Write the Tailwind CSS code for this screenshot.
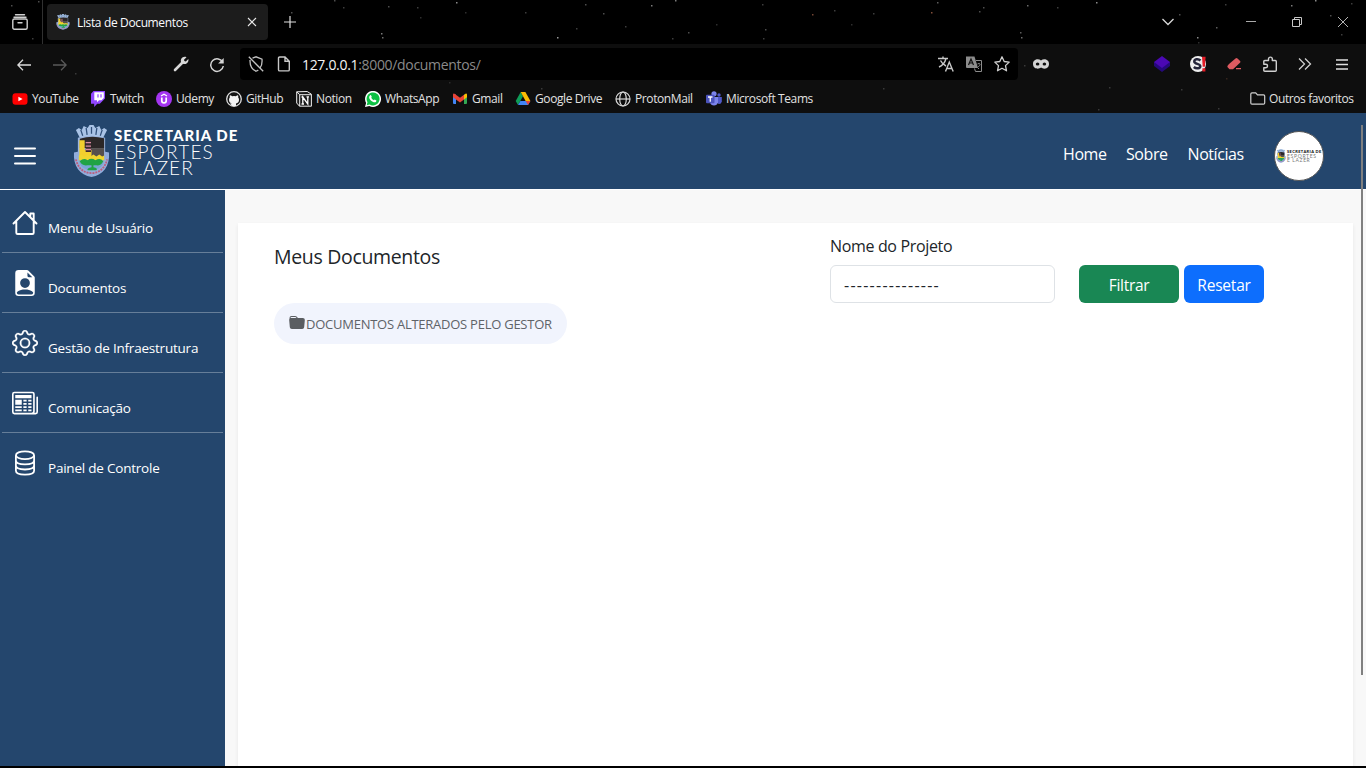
<!DOCTYPE html>
<html lang="pt-BR">
<head>
<meta charset="utf-8">
<title>Lista de Documentos</title>
<script src="https://cdn.jsdelivr.net/npm/@tailwindcss/browser@4"></script>
</head>
<body class="w-[1366px] h-[768px] overflow-hidden bg-black font-['Open_Sans','Noto_Sans',sans-serif]">
<svg class="hidden">
  <symbol id="crest" viewBox="0 0 38 54" preserveAspectRatio="none">
    <path d="M3 5l3-2 3 2 2-4 4 2 2-3h4l2 3 4-2 2 4 3-2 3 2-4 8H7z" fill="#a9c3e6"/>
    <path d="M8 5l2 6M13.500 3l1 7M19 2v7M24.500 3l-1 7M30 5l-2 6" stroke="#31507a" stroke-width="1.300"/>
    <path d="M5 13q14-4 28 0v24H5z" fill="#9db6de"/>
    <path d="M7 14q12-4 25-.500v10H7z" fill="#2b2727"/>
    <path d="M18 23.500h14v10H18z" fill="#55504d"/>
    <path d="M6.500 15.500h5.500v10h7v8H6.500z" fill="#f3cf2e"/>
    <path d="M13 15.500h5.500v12H13z" fill="#3a2a30"/>
    <path d="M13 18h5.500M13 21.500h5.500M13 25h5.500" stroke="#d98da0" stroke-width="1.400"/>
    <path d="M1 28l5-1v8h26v-8l5 1c1 14-6 23-18 25C7 51 0 42 1 28z" fill="#92addb"/>
    <path d="M3 35c2 9 8 14 16 14s14-5 16-14" fill="none" stroke="#bd5c7c" stroke-width="1.800" stroke-dasharray="2 1"/>
    <path d="M6 31l3-1 3 2 3-2 3 2 3-2 3 2 3-2 3 2 2-1v6H6z" fill="#f0d52f"/>
    <path d="M6 36h26c-1 6-5 10-13 10S7 42 6 36z" fill="#79a6d4"/>
    <path d="M7 37q4-4 8-1 4-3 8 0 5-3 8 1-2 5-7 4h-3v2q5 1 3 3h-9q-1-2 4-3v-2h-4q-6 1-8-4z" fill="#20a345"/>
  </symbol>
</svg>

<div class="relative h-[113px] bg-[#0e0e0e] text-[#fbfbfe]">
  <div class="h-11 flex items-center bg-black">
    <div class="w-[43px] h-11 border-r border-[#303030] flex items-center pl-3">
      <svg class="size-4" viewBox="0 0 16 16" fill="none" stroke="#d0d0d0" stroke-width="1.400" stroke-linecap="round"><path d="M3.500 .8h9M2 3.300h12"/><rect x=".8" y="5" width="14.400" height="10.200" rx="1.500" /><path d="M6 8.700h4"/></svg>
    </div>
    <div class="ml-1 w-[221px] h-9 rounded bg-[#1c1c1c] flex items-center pl-[9px]">
      <svg class="w-[14px] h-4"><use href="#crest"/></svg>
      <span class="ml-[7px] mt-0.5 w-[170px] text-[12px] tracking-[-0.360px] whitespace-nowrap">Lista de Documentos</span>
      <svg class="size-[10px]" viewBox="0 0 10 10" stroke="#e8e8e8" stroke-width="1.100"><path d="M1 1l8 8M9 1L1 9"/></svg>
    </div>
    <svg class="ml-4 size-3" viewBox="0 0 12 12" stroke="#e0e0e0" stroke-width="1.200"><path d="M0 6h12M6 0v12"/></svg>
    <svg class="ml-[866px] w-3 h-2" viewBox="0 0 12 8" fill="none" stroke="#d8d8d8" stroke-width="1.300"><path d="M.5 1L6 6.500 11.500 1"/></svg>
    <svg class="ml-[72px] w-[10px] h-2" viewBox="0 0 10 8"><path d="M0 3.500h10" stroke="#aaa"/></svg>
    <svg class="ml-9 size-[10px]" viewBox="0 0 10 10" fill="none" stroke="#c8c8c8"><path d="M.5 2.500h7v7h-7zM2.500 2.500v-2h7v7h-2"/></svg>
    <svg class="ml-9 size-[10px]" viewBox="0 0 10 10" stroke="#c8c8c8" stroke-width=".9"><path d="M0 0l10 10M10 0L0 10"/></svg>
  </div>

  <div class="h-10 flex items-center">
    <svg class="ml-[17px] mt-px w-[14px] h-3" viewBox="0 0 14 12" fill="none" stroke="#dcdcdc" stroke-width="1.300"><path d="M14 6H.8M6 .7L.8 6 6 11.300"/></svg>
    <svg class="ml-[22px] mt-px w-[14px] h-3" viewBox="0 0 14 12" fill="none" stroke="#5a5a5a" stroke-width="1.300"><path d="M0 6h13.200M8 .7L13.200 6 8 11.300"/></svg>
    <svg class="ml-[106px] size-4" viewBox="0 0 16 16"><path d="M2 14L9.500 6.500" stroke="#d8d8d8" stroke-width="2.600" stroke-linecap="round"/><path d="M13.500 1.200L11 3.700l.4 1.400 1.400.4 2.500-2.500c.7 2.300-.9 5-3.500 5C9 8 7.300 6 7.900 3.700 8.500 1.400 11.300.1 13.500 1.200z" fill="#d8d8d8"/></svg>
    <svg class="ml-5 mt-px size-4" viewBox="0 0 16 16" fill="none" stroke="#d4d4d4" stroke-width="1.500"><path d="M13.800 5.500A6.300 6.300 0 1 0 14.300 9"/><path d="M14.700 1v5.600H9.100z" fill="#d4d4d4" stroke="none"/></svg>
    <div class="ml-[15px] w-[778px] h-8 rounded bg-black flex items-center pl-2">
      <svg class="size-4" viewBox="0 0 16 16" fill="none" stroke="#c2c2c2" stroke-width="1.300"><path d="M4.500 2.200L8 .8l6 2.400c.3 4-.4 7-2 9M10.300 14q-1 .8-2.300 1.200C3.600 13.400 1.800 9.500 2 4M.8.800l14.400 14.400"/></svg>
      <svg class="ml-3 size-4" viewBox="0 0 16 16" fill="none" stroke="#c8c8c8" stroke-width="1.400"><path d="M2.500 2.200q0-1.200 1.200-1.200H9l4.300 4.300v8.400q0 1.200-1.200 1.200H3.700q-1.200 0-1.200-1.200zM9 1v4.300h4.300"/></svg>
      <span class="ml-[10px] mt-px w-[636px] text-[14px] tracking-[-0.320px] whitespace-nowrap text-[#8a8a8a]"><span class="text-[#f4f4f4]">127.0.0.1</span>:8000/documentos/</span>
      <svg class="size-4" viewBox="0 0 16 16" fill="none" stroke="#c8c8c8" stroke-width="1.400"><path d="M0 2.500h10M5 .5v2M8 2.500C7 6.500 4.500 9.500 1 11M2.500 4.500C4 7.500 6 9 8 10M7.500 15.500l3.800-9.500 3.900 9.500M8.800 12.500h5"/></svg>
      <svg class="ml-3 size-4" viewBox="0 0 16 16"><path d="M0 .5h8.500L12 12H1q-1 0-1-1z" fill="#8c8c8c"/><path d="M2.500 9L5 3l2.500 6M3.500 7h3" fill="none" stroke="#111" stroke-width="1.200"/><path d="M10 4.500h5.500v11H9.500l-1-3" fill="none" stroke="#8c8c8c"/><path d="M11.500 8q2.500-1.500 2.500.5c0 1.500-1.500 1-1.500 2.500M12.500 12v1" fill="none" stroke="#8c8c8c"/></svg>
      <svg class="ml-3 size-4" viewBox="0 0 16 16" fill="none" stroke="#cfcfcf" stroke-width="1.300" stroke-linejoin="round"><path d="M8 .8l2.200 4.700 5 .6-3.700 3.500 1 5.200L8 12.300l-4.500 2.500 1-5.200L.8 6.100l5-.6z"/></svg>
    </div>
    <svg class="ml-[15px] w-4 h-[10px]" viewBox="0 0 16 10"><path d="M8 1.500C5.500-.7 0 .100 0 5S5.500 10.700 8 8.500c2.500 2.200 8 1.400 8-3.500S10.500-.7 8 1.500z" fill="#d4d4d4"/><ellipse cx="4.600" cy="5" rx="1.800" ry="1.500" fill="#0e0e0e"/><ellipse cx="11.400" cy="5" rx="1.800" ry="1.500" fill="#0e0e0e"/></svg>
    <svg class="ml-[105px] size-4" viewBox="0 0 16 16"><path d="M0 6v4l8 6 8-6V6z" fill="#25087c"/><path d="M8 0l8 6-8 6-8-6z" fill="#4b08b4"/></svg>
    <svg class="ml-5 size-4" viewBox="0 0 16 16"><circle cx="8" cy="8" r="8" fill="#eee"/><path d="M10.500 4.500C8 2.200 4.300 3.200 4.300 5.500c0 3 6 1.700 6 4.700 0 2.300-4 3-6.500.8" fill="none" stroke="#25253a" stroke-width="2.500"/><path d="M12 .8h3.600l-.7 10h-2.200zM12.400 12.200h3v3.300h-3z" fill="#e31b25"/></svg>
    <svg class="ml-[21px] size-4" viewBox="0 0 16 16"><path d="M2 8L8.500 2.400q1-.8 2 .1l2.600 2.500q.7.900-.1 1.800L6 13.200H2.500L.8 11.400q-.9-1.200 0-2zM9 12h5v1.300H9z" fill="#de5b61"/></svg>
    <svg class="ml-[19px] size-4" viewBox="0 0 16 16" fill="none" stroke="#d0d0d0" stroke-width="1.400" stroke-linejoin="round"><path d="M1.800 5.500q0-1 1-1h3.700V3a1.900 1.900 0 0 1 3.800 0v1.500h3q1 0 1 1v8.700q0 1-1 1H2.800q-1 0-1-1v-2.400h2a1.700 1.700 0 0 0 0-3.500h-2z"/></svg>
    <svg class="ml-5 size-[14px]" viewBox="0 0 14 14" fill="none" stroke="#d0d0d0" stroke-width="1.300"><path d="M1 1.500L6.500 7 1 12.500M7 1.500L12.500 7 7 12.500"/></svg>
    <svg class="ml-6 w-3 h-[11px]" viewBox="0 0 12 11" stroke="#e0e0e0" stroke-width="1.300"><path d="M0 1h12M0 5.500h12M0 10h12"/></svg>
  </div>

  <div class="h-[29px] flex items-center px-3 gap-3 text-[12px] tracking-[-0.400px] text-[#e2e2e2] whitespace-nowrap">
    <div class="flex items-center gap-1"><svg class="size-4" viewBox="0 0 16 16"><rect x=".5" y="2.300" width="15" height="11.400" rx="3" fill="#f00"/><path d="M6.400 5.700l4.200 2.300-4.200 2.300z" fill="#fff"/></svg><span class="w-[46px]">YouTube</span></div>
    <div class="flex items-center gap-1"><svg class="size-4" viewBox="0 0 16 16"><path d="M3.500 0L1 2.700v10h3.200V16l3-3.300h2.600L15 7.500V0z" fill="#9146ff"/><path d="M4.300 1.200h9.500v5.800l-2.300 2.300H9l-2 2v-2H4.300z" fill="#fff"/><path d="M8 3.300v3.200M11 3.300v3.200" stroke="#9146ff" stroke-width="1.200"/></svg><span class="w-[34px]">Twitch</span></div>
    <div class="flex items-center gap-1"><svg class="size-4" viewBox="0 0 16 16"><circle cx="8" cy="8" r="8" fill="#a435f0"/><path d="M5 5l3-1.700L11 5" fill="none" stroke="#fff" stroke-width="1.300"/><path d="M5.800 6.500v3.200q0 2.200 2.200 2.200t2.200-2.200V6.500" fill="none" stroke="#fff" stroke-width="1.700"/></svg><span class="w-[38px]">Udemy</span></div>
    <div class="flex items-center gap-1"><svg class="size-4" viewBox="0 0 16 16"><circle cx="8" cy="8" r="7.300" fill="#151515" stroke="#ddd" stroke-width="1.300"/><path d="M6 15v-2.500q-2 .5-2.700-1.300M6 12.500c-2-.4-3-1.600-3-3.700q0-1.300.8-2.200-.3-1.300.2-2.300 1 0 2.200.9a7 7 0 0 1 3.600 0q1.200-.9 2.200-.9.500 1 .2 2.300.8.900.8 2.200c0 2.100-1 3.300-3 3.700V15H6z" fill="#f4f4f4"/></svg><span class="w-[38px]">GitHub</span></div>
    <div class="flex items-center gap-1"><svg class="size-4" viewBox="0 0 16 16"><path d="M.7.800l10.500-.3 4.200 2.700v12H3.500L.7 12z" fill="#1a1a1a" stroke="#eee"/><path d="M.8 1l3 2.700h11.400M3.700 3.700v11.500" fill="none" stroke="#eee"/><path d="M6.800 13V6l5 7V5.800M5.500 6h2M10.500 5.800h2.500M5.500 13h2.500" fill="none" stroke="#fff" stroke-width="1.300"/></svg><span class="w-[37px]">Notion</span></div>
    <div class="flex items-center gap-1"><svg class="size-4" viewBox="0 0 16 16"><path d="M0 16l1.100-4.100A8 8 0 1 1 4.300 15z" fill="#fff"/><path d="M1.700 14.300l.8-3A6.500 6.500 0 1 1 4.700 13.500z" fill="#0cc043"/><path d="M5 4.500c.5-.7 1-.6 1.300.2l.5 1.200-.6.9q.9 1.700 2.600 2.500l.9-.8 1.700.9c.1 1.500-1.300 2.200-2.700 1.800-2.500-.8-4.800-3.400-4.500-5.200.1-.8.500-1.200.8-1.500z" fill="#fff"/></svg><span class="w-[55px]">WhatsApp</span></div>
    <div class="flex items-center gap-1"><svg class="size-4" viewBox="0 0 16 16"><path d="M1 3.500h3V13H2q-1 0-1-1z" fill="#4285f4"/><path d="M12 3.500h3V12q0 1-1 1h-2z" fill="#34a853"/><path d="M12 4l1.500-1.300Q15 2.300 15 4v2.300L12 8.500z" fill="#fbbc04"/><path d="M1 4q0-1.800 1.500-1.300L8 6.800l4-3v4.700l-4 3-7-5.200z" fill="#ea4335"/></svg><span class="w-[31px]">Gmail</span></div>
    <div class="flex items-center gap-1"><svg class="size-4" viewBox="0 0 16 16"><path d="M5.700 1L.7 10l2.300 4 5-8.800z" fill="#0f9d58"/><path d="M5.700 1h4.700l5 9h-4.800z" fill="#fbbc04"/><path d="M5.400 10h10l-2.400 4H3z" fill="#4285f4"/><path d="M10.700 10h4.700L13 14z" fill="#ea4335"/></svg><span class="w-[68px]">Google Drive</span></div>
    <div class="flex items-center gap-1"><svg class="size-4" viewBox="0 0 16 16" fill="none" stroke="#d8d8d8" stroke-width="1.200"><circle cx="8" cy="8" r="7"/><ellipse cx="8" cy="8" rx="3.300" ry="7"/><path d="M1 8h14"/></svg><span class="w-[59px]">ProtonMail</span></div>
    <div class="flex items-center gap-1"><svg class="size-4" viewBox="0 0 16 16"><circle cx="13" cy="4" r="1.700" fill="#5059c9"/><circle cx="8" cy="2.800" r="2.600" fill="#7b83eb"/><path d="M11 6h4.800v4.500q-.6 3-3.500 2.500z" fill="#5059c9"/><path d="M4 6h8v5.500a4.200 4.200 0 0 1-8 0z" fill="#7b83eb"/><rect y="3.800" width="8.500" height="8.500" rx="1" fill="#4b53bc"/><path d="M2 6h4.500M4.250 6v4.800" stroke="#fff" stroke-width="1.300"/></svg><span class="w-[87px]">Microsoft Teams</span></div>
    <div class="ml-auto flex items-center gap-[3px]"><svg class="size-4" viewBox="0 0 16 16" fill="none" stroke="#d0d0d0" stroke-width="1.200"><path d="M.8 3q0-1.200 1.200-1.200h3.700L7.500 3.800h6q1.200 0 1.200 1.200v7q0 1.200-1.200 1.200H2Q.8 13.200.8 12z"/></svg><span class="w-[85px]">Outros favoritos</span></div>
  </div>

  <svg class="absolute inset-0 w-full h-[113px] pointer-events-none" id="stars" viewBox="0 0 1366 113"></svg>
</div>

<div class="relative">
  <header class="h-[77px] bg-[#24466d] border-b border-white flex items-center text-white">
    <svg class="ml-[14px] mt-[9px] w-[22px] h-[18px]" viewBox="0 0 22 18" stroke="#fff" stroke-width="2" stroke-linecap="round"><path d="M1 1.500h20M1 9h20M1 16.500h20"/></svg>
    <div class="ml-[37px] flex items-start">
      <svg class="w-[37px] h-[53px]"><use href="#crest"/></svg>
      <div class="ml-[4px] pt-[3px] flex flex-col whitespace-nowrap font-['Lato',sans-serif]">
        <span class="text-[15px] leading-[15px] font-black tracking-[1px]">SECRETARIA DE</span>
        <span class="text-[19px] leading-[17px] font-light tracking-[1.200px]">ESPORTES</span>
        <span class="text-[19px] leading-[15px] font-light tracking-[1.100px]">E LAZER</span>
      </div>
    </div>
    <nav class="ml-auto flex items-center text-[16px] tracking-[-0.420px] whitespace-nowrap mt-[5px]">
      <span class="w-[63px]">Home</span><span class="w-[61.500px]">Sobre</span><span class="w-[86.500px]">Notícias</span>
    </nav>
    <div class="mr-[42px] mt-[9px] w-[50px] h-[50px] rounded-full bg-white border border-[#555] overflow-hidden flex items-center pl-px">
      <svg class="w-[10px] h-[14px] shrink-0"><use href="#crest"/></svg>
      <div class="ml-px flex flex-col font-['Lato',sans-serif] text-[#777] whitespace-nowrap">
        <span class="text-[4px] leading-[4px] font-black tracking-[.380px] text-[#111]">SECRETARIA DE</span>
        <span class="text-[5px] leading-[4px] tracking-[.700px]">ESPORTES</span>
        <span class="text-[5px] leading-[4px] tracking-[.600px]">E LAZER</span>
      </div>
    </div>
  </header>

  <div class="flex h-[576px]">
    <aside class="w-[225px] bg-[#24466d] text-white text-[13.500px] tracking-[-0.220px] px-0.5 pt-[3px]">
      <div class="h-[60px] flex items-center pl-[10px] border-b border-[#667e99]"><svg class="size-[26px]" viewBox="0 0 26 26" fill="none" stroke="#fff" stroke-width="1.900" stroke-linecap="round" stroke-linejoin="round"><path d="M1.500 13.500L13 2l11.500 11.500M4.300 11.500v11.200q0 1.300 1.300 1.300h14.800q1.300 0 1.300-1.300V11.500M18.300 7V3.500h3.400v6.800"/></svg><span class="ml-[10px] pt-[11px]">Menu de Usuário</span></div>
      <div class="h-[60px] flex items-center pl-[10px] border-b border-[#667e99]"><svg class="size-[26px]" viewBox="0 0 16 16" fill="#fff" fill-rule="evenodd"><path d="M9.293 0H4a2 2 0 0 0-2 2v12a2 2 0 0 0 2 2h8a2 2 0 0 0 2-2V4.707A1 1 0 0 0 13.707 4L10 .293A1 1 0 0 0 9.293 0M9.500 3.500v-2l3 3h-2a1 1 0 0 1-1-1M11 8a3 3 0 1 1-6 0 3 3 0 0 1 6 0m2 5.755V14a1 1 0 0 1-1 1H4a1 1 0 0 1-1-1v-.245S4 12 8 12s5 1.755 5 1.755"/></svg><span class="ml-[10px] pt-[11px]">Documentos</span></div>
      <div class="h-[60px] flex items-center pl-[10px] border-b border-[#667e99]"><svg class="size-[26px]" viewBox="0 0 16 16" fill="#fff" stroke="#fff" stroke-width=".150"><path d="M8 4.754a3.246 3.246 0 1 0 0 6.492 3.246 3.246 0 0 0 0-6.492M5.754 8a2.246 2.246 0 1 1 4.492 0 2.246 2.246 0 0 1-4.492 0"/><path d="M9.796 1.343c-.527-1.790-3.065-1.790-3.592 0l-.094.319a.873.873 0 0 1-1.255.52l-.292-.16c-1.640-.892-3.433.902-2.540 2.541l.159.292a.873.873 0 0 1-.52 1.255l-.319.094c-1.790.527-1.790 3.065 0 3.592l.319.094a.873.873 0 0 1 .52 1.255l-.16.292c-.892 1.640.901 3.434 2.541 2.540l.292-.159a.873.873 0 0 1 1.255.52l.094.319c.527 1.790 3.065 1.790 3.592 0l.094-.319a.873.873 0 0 1 1.255-.52l.292.16c1.640.893 3.434-.902 2.540-2.541l-.159-.292a.873.873 0 0 1 .52-1.255l.319-.094c1.790-.527 1.790-3.065 0-3.592l-.319-.094a.873.873 0 0 1-.52-1.255l.16-.292c.893-1.640-.902-3.433-2.541-2.540l-.292.159a.873.873 0 0 1-1.255-.52zm-2.633.283c.246-.835 1.428-.835 1.674 0l.094.319a1.873 1.873 0 0 0 2.693 1.115l.291-.16c.764-.415 1.600.42 1.184 1.185l-.159.292a1.873 1.873 0 0 0 1.116 2.692l.318.094c.835.246.835 1.428 0 1.674l-.319.094a1.873 1.873 0 0 0-1.115 2.693l.16.291c.415.764-.42 1.600-1.185 1.184l-.291-.159a1.873 1.873 0 0 0-2.693 1.116l-.094.318c-.246.835-1.428.835-1.674 0l-.094-.319a1.873 1.873 0 0 0-2.692-1.115l-.292.16c-.764.415-1.600-.42-1.184-1.185l.159-.291A1.873 1.873 0 0 0 1.945 8.930l-.319-.094c-.835-.246-.835-1.428 0-1.674l.319-.094A1.873 1.873 0 0 0 3.060 4.377l-.16-.292c-.415-.764.42-1.600 1.185-1.184l.292.159a1.873 1.873 0 0 0 2.692-1.115z"/></svg><span class="ml-[10px] pt-[11px]">Gestão de Infraestrutura</span></div>
      <div class="h-[60px] flex items-center pl-[10px] border-b border-[#667e99]"><svg class="size-[26px]" viewBox="0 0 16 16" fill="#fff"><path d="M0 2.500A1.500 1.500 0 0 1 1.500 1h11A1.500 1.500 0 0 1 14 2.500v10.528c0 .3-.05.654-.238.972h.738a.5.5 0 0 0 .5-.5v-9a.5.5 0 0 1 1 0v9a1.500 1.500 0 0 1-1.500 1.500H1.497A1.497 1.497 0 0 1 0 13.500zM12 14c.37 0 .654-.211.853-.441.092-.106.147-.279.147-.531V2.500a.5.5 0 0 0-.5-.5h-11a.5.5 0 0 0-.5.5v11c0 .278.223.5.497.5z"/><path d="M2 3h10v2H2zm0 3h4v3H2zm0 4h4v1H2zm0 2h4v1H2zm5-6h2v1H7zm3 0h2v1h-2zM7 8h2v1H7zm3 0h2v1h-2zm-3 2h2v1H7zm3 0h2v1h-2zm-3 2h2v1H7zm3 0h2v1h-2z"/></svg><span class="ml-[10px] pt-[11px]">Comunicação</span></div>
      <div class="h-[60px] flex items-center pl-[10px]"><svg class="size-[26px]" viewBox="0 0 16 16" fill="none" stroke="#fff" stroke-width="1.100"><ellipse cx="8" cy="3.200" rx="5.600" ry="2.400"/><path d="M2.400 3.200v9.600c0 3.200 11.200 3.200 11.200 0V3.200M2.400 6.400c0 3.200 11.200 3.200 11.200 0M2.400 9.600c0 3.200 11.200 3.200 11.200 0"/></svg><span class="ml-[10px] pt-[10px]">Painel de Controle</span></div>
    </aside>

    <main class="flex-1 bg-[#f8f8f8] pl-[13px] pr-[13px] pt-[33px] overflow-hidden">
      <section class="h-[600px] bg-white shadow-[0_2px_4px_rgba(0,0,0,0.075)] flex text-[#212529]">
        <div class="w-[592px] pl-9 pt-5">
          <h1 class="text-[19.500px] leading-[28px] tracking-[-0.330px]">Meus Documentos</h1>
          <div class="mt-[32px] w-[293px] h-[41px] rounded-full bg-[#f1f4fd] flex items-center pl-[15px] text-[13px] tracking-[-0.250px] text-[#5f6368] whitespace-nowrap">
            <svg class="w-4 h-4 mb-1 mt-0.5" viewBox="0 0 16 16" fill="#5a5d61"><path d="M9.828 3h3.982a2 2 0 0 1 1.992 2.181l-.637 7A2 2 0 0 1 13.174 14H2.825a2 2 0 0 1-1.991-1.819l-.637-7a2 2 0 0 1 .342-1.310L.5 3a2 2 0 0 1 2-2h3.672a2 2 0 0 1 1.414.586l.828.828A2 2 0 0 0 9.828 3m-8.322.12q.322-.119.684-.12h5.396l-.707-.707A1 1 0 0 0 6.172 2H2.500a1 1 0 0 0-1 .981z"/></svg>
            <span class="ml-px mt-0.5">DOCUMENTOS ALTERADOS PELO GESTOR</span>
          </div>
        </div>
        <form class="pt-[11px] text-[16px] leading-6">
          <label class="block mb-[7px] tracking-[-0.340px]">Nome do Projeto</label>
          <div class="flex">
            <div class="w-[225px] h-[38px] border border-[#dee2e6] rounded-md pl-[13px] flex items-center pt-0.5 tracking-[1.250px]">---------------</div>
            <button type="button" class="ml-6 w-[100px] h-[38px] rounded-md bg-[#198754] text-white pt-0.5 text-[15.500px] tracking-[-0.280px]">Filtrar</button>
            <button type="button" class="ml-[5px] w-20 h-[38px] rounded-md bg-[#0d6efd] text-white pt-0.5 text-[15.500px] tracking-[-0.220px]">Resetar</button>
          </div>
        </form>
      </section>
    </main>
  </div>
  <div class="absolute left-[1361px] top-3 w-0.5 h-[550px] bg-[#808080]"></div>
</div>
<script>
const stars = [[11,5,.5],[38,1,.5],[32,38,.4],[291,12,.5],[334,0,.5],[343,7,.4],[388,6,.5],[417,7,.4],[456,2,.9],[381,33,.8],[382,37,.7],[465,12,.3],[525,12,.4],[557,37,1],[576,28,.4],[585,4,.5],[603,13,.5],[625,26,.4],[651,5,.8],[675,0,.8],[672,38,.4],[688,32,.5],[762,4,.4],[765,29,.5],[763,38,.4],[812,14,.8,1],[834,10,.4],[873,13,.4],[931,12,.9,1],[937,2,.6],[979,11,.5],[983,7,.5],[1027,5,.7],[1057,7,.4],[1096,2,.9],[1020,32,.6],[1021,37,.7],[1179,14,.5],[1197,37,.9],[1216,27,.6],[1225,4,.4],[1291,5,.8],[1315,0,.9],[1330,15,.5],[1341,34,.4],[1351,3,.4],[1198,42,.3],[883,88,.3],[1024,65,.3],[1109,87,.3],[1226,78,.3,1],[1181,89,.3],[75,73,.3],[541,88,.3],[449,82,.2],[1098,109,.3],[1218,108,.3],[120,20,.3],[420,17,.3],[716,24,.3],[851,24,.3]];
const layer = document.getElementById('stars');
let out = '';
for (const [x, y, a, warm] of stars) out += `<rect x="${x}" y="${y}" width="1.500" height="1.500" fill="${warm ? '#f0906a' : '#fff'}" opacity="${a * .6}"/>`;
layer.innerHTML = out;
</script>
</body>
</html>
